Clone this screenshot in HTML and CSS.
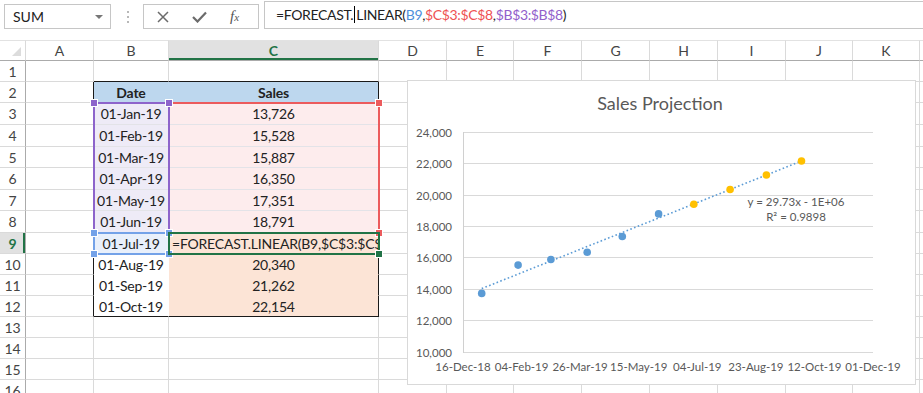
FILE: index.html
```html
<!DOCTYPE html>
<html lang="en">
<head>
  <meta charset="UTF-8" />
  <meta name="viewport" content="width=device-width, initial-scale=1.0"/>
  <title>Sales Projection - FORECAST.LINEAR</title>
  <link rel="stylesheet" href="styles.css" />
</head>
<body>
  <!-- barra de fórmulas -->
  <div class="formula-bar">
    <div class="name-box">
      <span>SUM</span>
      <span class="caret"></span>
    </div>
    <svg class="grip" width="4" height="14" viewBox="0 0 4 14">
      <circle cx="2" cy="2" r="1" /><circle cx="2" cy="7" r="1" /><circle cx="2" cy="12" r="1" />
    </svg>
    <div class="fx-buttons">
      <svg class="btn-icon" width="12" height="12" viewBox="0 0 12 12"><path d="M1 1 L11 11 M11 1 L1 11" /></svg>
      <svg class="btn-icon check" width="15" height="12" viewBox="0 0 15 12"><path d="M1 6 L5.5 10.5 L14 1.5" /></svg>
      <span class="fx"><i>f</i><span class="fx-x">x</span></span>
    </div>
    <div class="formula-input">=FORECAST.<span class="cursor"></span>LINEAR(<span class="ref-blue">B9</span>,<span class="ref-red">$C$3:$C$8</span>,<span class="ref-purple">$B$3:$B$8</span>)</div>
  </div>

  <!-- planilha -->
  <div class="sheet">
    <table class="grid">
      <colgroup>
        <col class="w-rh"><col class="w-68"><col class="w-b"><col class="w-c"><col class="w-68"><col class="w-67">
        <col class="w-68"><col class="w-68"><col class="w-68"><col class="w-68"><col class="w-67"><col class="w-67"><col class="w-l">
      </colgroup>
      <thead>
        <tr>
          <th class="corner"><span class="corner-tri"></span></th>
          <th>A</th><th>B</th><th class="col-active">C</th><th>D</th><th>E</th><th>F</th>
          <th>G</th><th>H</th><th>I</th><th>J</th><th>K</th><th></th>
        </tr>
      </thead>
      <tbody>
        <tr class="r">
          <th>1</th><td></td><td class="bt"></td><td class="bt"></td><td></td><td></td><td></td><td></td><td></td><td></td><td></td><td></td><td></td>
        </tr>
        <tr class="r">
          <th>2</th><td class="bl"></td><td class="hd in">Date</td><td class="hd cr">Sales</td><td></td><td></td><td></td><td></td><td></td><td></td><td></td><td></td><td></td>
        </tr>
        <tr class="r22">
          <th>3</th><td class="bl"></td><td class="date-sel in ln">01-Jan-19</td><td class="sales-sel cr ln">13,726</td><td></td><td></td><td></td><td></td><td></td><td></td><td></td><td></td><td></td>
        </tr>
        <tr class="r22">
          <th>4</th><td class="bl"></td><td class="date-sel in ln">01-Feb-19</td><td class="sales-sel cr ln">15,528</td><td></td><td></td><td></td><td></td><td></td><td></td><td></td><td></td><td></td>
        </tr>
        <tr class="r">
          <th>5</th><td class="bl"></td><td class="date-sel in ln">01-Mar-19</td><td class="sales-sel cr ln">15,887</td><td></td><td></td><td></td><td></td><td></td><td></td><td></td><td></td><td></td>
        </tr>
        <tr class="r22">
          <th>6</th><td class="bl"></td><td class="date-sel in ln">01-Apr-19</td><td class="sales-sel cr ln">16,350</td><td></td><td></td><td></td><td></td><td></td><td></td><td></td><td></td><td></td>
        </tr>
        <tr class="r">
          <th>7</th><td class="bl"></td><td class="date-sel in ln">01-May-19</td><td class="sales-sel cr ln">17,351</td><td></td><td></td><td></td><td></td><td></td><td></td><td></td><td></td><td></td>
        </tr>
        <tr class="r22">
          <th>8</th><td class="bl"></td><td class="date-sel in">01-Jun-19</td><td class="sales-sel cr">18,791</td><td></td><td></td><td></td><td></td><td></td><td></td><td></td><td></td><td></td>
        </tr>
        <tr class="r">
          <th class="row-active">9</th><td class="bl"></td><td class="b9 in">01-Jul-19</td><td class="peach cr editing"><div class="edit-text">=FORECAST.LINEAR(B9,$C$3:$C$8,$B$3:$B$8)</div></td><td></td><td></td><td></td><td></td><td></td><td></td><td></td><td></td><td></td>
        </tr>
        <tr class="r">
          <th>10</th><td class="bl"></td><td class="in">01-Aug-19</td><td class="peach cr">20,340</td><td></td><td></td><td></td><td></td><td></td><td></td><td></td><td></td><td></td>
        </tr>
        <tr class="r">
          <th>11</th><td class="bl"></td><td class="in">01-Sep-19</td><td class="peach cr">21,262</td><td></td><td></td><td></td><td></td><td></td><td></td><td></td><td></td><td></td>
        </tr>
        <tr class="r">
          <th>12</th><td class="bl"></td><td class="in bb">01-Oct-19</td><td class="peach cr bb">22,154</td><td></td><td></td><td></td><td></td><td></td><td></td><td></td><td></td><td></td>
        </tr>
        <tr class="r">
          <th>13</th><td></td><td></td><td></td><td></td><td></td><td></td><td></td><td></td><td></td><td></td><td></td><td></td>
        </tr>
        <tr class="r">
          <th>14</th><td></td><td></td><td></td><td></td><td></td><td></td><td></td><td></td><td></td><td></td><td></td><td></td>
        </tr>
        <tr class="r">
          <th>15</th><td></td><td></td><td></td><td></td><td></td><td></td><td></td><td></td><td></td><td></td><td></td><td></td>
        </tr>
        <tr class="r">
          <th>16</th><td></td><td></td><td></td><td></td><td></td><td></td><td></td><td></td><td></td><td></td><td></td><td></td>
        </tr>
      </tbody>
    </table>

    <!-- destaques das referências da fórmula -->
    <div class="ref-box ref-box-red"><i class="h tr-h"></i><i class="h br-h"></i></div>
    <div class="ref-box ref-box-purple"><i class="h tl-h"></i><i class="h tr-h"></i><i class="h bl-h"></i><i class="h br-h"></i></div>
    <div class="ref-box ref-box-blue"><i class="h tl-h"></i><i class="h tr-h"></i><i class="h bl-h"></i><i class="h br-h"></i></div>
    <div class="ref-box ref-box-green"><i class="h br-h"></i></div>

    <!-- gráfico -->
    <div class="chart">
      <svg width="509" height="305" viewBox="0 0 509 305">
        <text class="chart-title" x="253" y="30" text-anchor="middle">Sales Projection</text>
        <g class="gridlines">
          <line x1="56" x2="466" y1="52.5" y2="52.5"/>
          <line x1="56" x2="466" y1="83.5" y2="83.5"/>
          <line x1="56" x2="466" y1="115.5" y2="115.5"/>
          <line x1="56" x2="466" y1="146.5" y2="146.5"/>
          <line x1="56" x2="466" y1="177.5" y2="177.5"/>
          <line x1="56" x2="466" y1="209.5" y2="209.5"/>
          <line x1="56" x2="466" y1="240.5" y2="240.5"/>
          <line x1="56" x2="466" y1="272.5" y2="272.5"/>
        </g>
        <line class="axis" x1="56.5" y1="52" x2="56.5" y2="273"/>
        <g class="axis-label" text-anchor="end">
          <text x="45" y="56.5">24,000</text>
          <text x="45" y="87.5">22,000</text>
          <text x="45" y="119.5">20,000</text>
          <text x="45" y="150.5">18,000</text>
          <text x="45" y="181.5">16,000</text>
          <text x="45" y="213.5">14,000</text>
          <text x="45" y="244.5">12,000</text>
          <text x="45" y="276.5">10,000</text>
        </g>
        <g class="axis-label" text-anchor="middle">
          <text x="56" y="291">16-Dec-18</text>
          <text x="114.6" y="291">04-Feb-19</text>
          <text x="173.1" y="291">26-Mar-19</text>
          <text x="231.7" y="291">15-May-19</text>
          <text x="290.3" y="291">04-Jul-19</text>
          <text x="348.9" y="291">23-Aug-19</text>
          <text x="407.4" y="291">12-Oct-19</text>
          <text x="466" y="291">01-Dec-19</text>
        </g>
        <line class="trend" x1="74.7" y1="208.6" x2="394.5" y2="81"/>
        <g class="pt-actual">
          <circle cx="74.7" cy="213.4" r="3.8"/>
          <circle cx="111.1" cy="185.1" r="3.8"/>
          <circle cx="143.9" cy="179.5" r="3.8"/>
          <circle cx="180.2" cy="172.2" r="3.8"/>
          <circle cx="215.3" cy="156.5" r="3.8"/>
          <circle cx="251.6" cy="133.9" r="3.8"/>
        </g>
        <g class="pt-forecast">
          <circle cx="286.8" cy="124.3" r="3.8"/>
          <circle cx="323.1" cy="109.5" r="3.8"/>
          <circle cx="359.4" cy="95" r="3.8"/>
          <circle cx="394.5" cy="81" r="3.8"/>
        </g>
        <text class="axis-label" x="389" y="126" text-anchor="middle">y = 29.73x - 1E+06</text>
        <text class="axis-label" x="389" y="141" text-anchor="middle">R² = 0.9898</text>
      </svg>
    </div>
  </div>
</body>
</html>
```

FILE: styles.css
```css
/* =====================
  Geral
====================== */

body {
  margin: 0;
  width: 923px;
  height: 393px;
  overflow: hidden;
  font-family: Lato, "Open Sans", sans-serif;
  background-color: #ffffff;
  color: #222;
}

/* =====================
  Barra de fórmulas
====================== */

.formula-bar {
  display: flex;
  align-items: flex-start;
  height: 40px;
}

.name-box {
  margin: 4px 0 0 4px;
  width: 107px;
  height: 25px;
  box-sizing: border-box;
  border: 1px solid #c6c6c6;
  display: flex;
  align-items: center;
  justify-content: space-between;
  padding: 0 7px 0 8px;
  font-size: 14px;
}

.caret {
  width: 0;
  height: 0;
  border-left: 4px solid transparent;
  border-right: 4px solid transparent;
  border-top: 4px solid #777;
}

.grip {
  margin: 10px 0 0 15px;
  fill: #a0a0a0;
}

.fx-buttons {
  margin: 4px 0 0 13px;
  width: 116px;
  height: 25px;
  box-sizing: border-box;
  border: 1px solid #c6c6c6;
  display: flex;
  align-items: center;
  padding: 0 0 0 13px;
  gap: 25px;
}

.btn-icon {
  stroke: #6b6b6b;
  fill: none;
  stroke-width: 1.5;
}

.btn-icon.check {
  stroke-width: 2.2;
  margin-left: -2px;
}

.fx {
  font-family: "Liberation Serif", serif;
  color: #555;
  font-size: 15px;
  margin-left: -2px;
}

.fx-x {
  font-style: italic;
  font-size: 11px;
}

.formula-input {
  flex: 1;
  margin: 1px 0 0 5px;
  height: 28px;
  box-sizing: border-box;
  border: 1px solid #c6c6c6;
  border-right: none;
  padding: 0 0 0 11px;
  font-size: 14px;
  letter-spacing: -0.35px;
  line-height: 26px;
  white-space: nowrap;
  color: #222;
}

.cursor {
  display: inline-block;
  width: 1px;
  height: 17px;
  background-color: #000;
  vertical-align: -3px;
  margin: 0 1px;
}

.ref-blue { color: #4f8fdb; }
.ref-red { color: #ee5253; }
.ref-purple { color: #9260cb; }

/* =====================
  Planilha
====================== */

.sheet {
  position: relative;
}

.grid {
  table-layout: fixed;
  width: 960px;
  border-collapse: separate;
  border-spacing: 0;
  font-size: 14px;
  letter-spacing: -0.2px;
}

.w-rh { width: 26px; }
.w-68 { width: 68px; }
.w-67 { width: 67px; }
.w-b { width: 75px; }
.w-c { width: 210px; }
.w-l { width: 40px; }

.grid th,
.grid td {
  padding: 0;
  box-sizing: border-box;
  border-right: 1px solid #dadada;
  border-bottom: 1px solid #dadada;
  text-align: center;
  overflow: hidden;
  white-space: nowrap;
}

.grid thead th {
  height: 21px;
  font-weight: normal;
  font-size: 14px;
  letter-spacing: 0;
  color: #444;
  border-top: 1px solid #e2e2e2;
  border-bottom-color: #ababab;
}

.grid tbody th {
  font-weight: normal;
  font-size: 14px;
  letter-spacing: 0;
  color: #444;
  border-right-color: #ababab;
}

.corner {
  position: relative;
}

.corner-tri {
  position: absolute;
  right: 4px;
  bottom: 4px;
  width: 0;
  height: 0;
  border-left: 9px solid transparent;
  border-bottom: 9px solid #dcdcdc;
}

.grid thead th.col-active {
  background-color: #e1e1e1;
  color: #217346;
  font-weight: bold;
  box-shadow: inset 0 -2px 0 #217346;
}

.grid tbody th.row-active {
  background-color: #e1e1e1;
  color: #217346;
  font-weight: bold;
  box-shadow: inset -2px 0 0 #217346;
}

.r { height: 21px; }
.r22 { height: 22px; }

/* bordas da tabela B2:C12 */
.grid td.bt { border-bottom-color: #1a1a1a; }
.grid td.bl { border-right-color: #1a1a1a; }
.grid td.cr { border-right-color: #1a1a1a; }
.grid td.in { border-right-color: transparent; border-bottom-color: transparent; }
.grid td.cr { border-bottom-color: transparent; }
.grid td.ln { border-bottom-color: #e3e3e8; }
.grid td.bb { border-bottom-color: #1a1a1a; }

.hd {
  background-color: #bdd7ee;
  font-weight: bold;
}

.date-sel { background-color: #eeebf7; }
.sales-sel { background-color: #fdeced; }
.b9 { background-color: #e9f0fb; }
.peach { background-color: #fce4d6; }

.editing {
  text-align: left;
}

.edit-text {
  padding-left: 3px;
  overflow: hidden;
}

/* =====================
  Caixas de referência (sobrepostas)
====================== */

.ref-box {
  position: absolute;
  box-sizing: border-box;
  border: 2px solid;
  pointer-events: none;
}

.ref-box-purple {
  left: 93px;
  top: 62px;
  width: 77px;
  height: 132px;
  border-color: #8d64cb;
  color: #8d64cb;
}

.ref-box-red {
  left: 168px;
  top: 62px;
  width: 212px;
  height: 132px;
  border-color: #ec5b5d;
  color: #ec5b5d;
}

.ref-box-blue {
  left: 93px;
  top: 192px;
  width: 77px;
  height: 23px;
  border-color: #74a2e8;
  color: #74a2e8;
}

.ref-box-green {
  left: 168px;
  top: 192px;
  width: 212px;
  height: 23px;
  border-color: #217346;
  color: #217346;
}

.h {
  position: absolute;
  width: 6px;
  height: 6px;
  background-color: currentColor;
  border: 1px solid #fff;
}

.tl-h { left: -5px; top: -5px; }
.tr-h { right: -5px; top: -5px; }
.bl-h { left: -5px; bottom: -5px; }
.br-h { right: -5px; bottom: -5px; }

/* =====================
  Gráfico
====================== */

.chart {
  position: absolute;
  left: 407px;
  top: 40px;
  width: 509px;
  height: 305px;
  box-sizing: border-box;
  border: 1px solid #d9d9d9;
  background-color: #ffffff;
}

.chart svg {
  display: block;
  margin: -1px 0 0 -1px;
}

.chart-title {
  font-family: Lato, sans-serif;
  font-size: 18px;
  fill: #595959;
}

.gridlines line {
  stroke: #d9d9d9;
  stroke-width: 1;
}

.axis {
  stroke: #d0d0d0;
  stroke-width: 1;
}

.axis-label {
  font-family: Lato, sans-serif;
  font-size: 11.5px;
  fill: #595959;
}

.trend {
  stroke: #5b9bd5;
  stroke-width: 1.6;
  stroke-dasharray: 1.6 2.4;
}

.pt-actual { fill: #5b9bd5; }
.pt-forecast { fill: #ffc000; }
```
